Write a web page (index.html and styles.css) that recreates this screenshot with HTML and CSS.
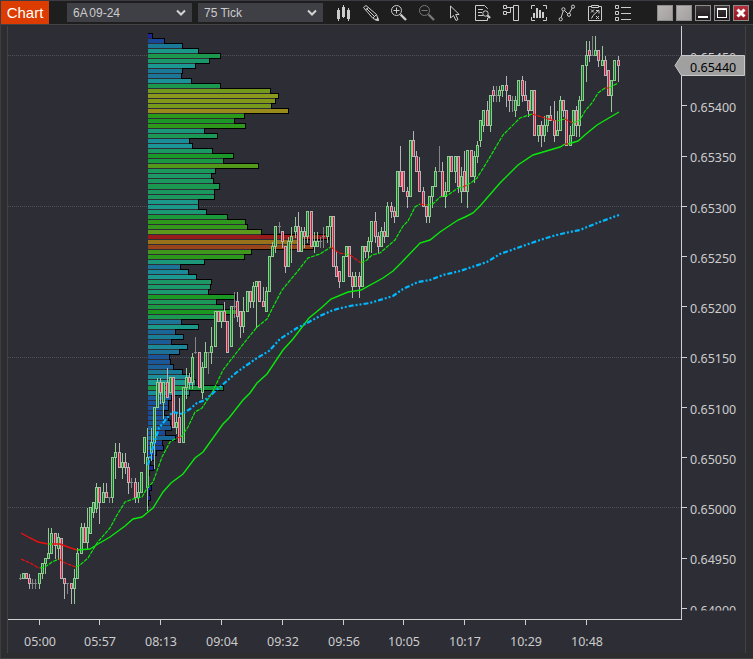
FILE: index.html
```html
<!DOCTYPE html>
<html lang="en">
<head>
  <meta charset="UTF-8">
  <title>Chart</title>
  <link rel="stylesheet" href="styles.css">
</head>
<body>
  <div class="window">
    <div class="toolbar">
      <div class="title">Chart</div>
      <div class="select instrument"><span>6A 09-24</span><svg width="12" height="8"><path d="M2 1.5L6 5.5L10 1.5"/></svg></div>
      <div class="select interval"><span>75 Tick</span><svg width="12" height="8"><path d="M2 1.5L6 5.5L10 1.5"/></svg></div>
      <div class="icons">
        <!-- chart style -->
        <svg viewBox="0 0 28 24"><path class="solid" d="M8 10h3v9h-3zM9 8h1v13h-1zM13 7h3v10h-3zM14 5h1v13h-1zM18 10h3v9h-3zM19 8h1v13h-1z"/></svg>
        <!-- draw -->
        <svg viewBox="0 0 28 24"><path d="M6.500 7.500L9 5.500L19.500 14.500L21.500 20.500L16 18.500ZM8.500 10L11.500 7.500M16 18L19.500 14.500M9.500 8.500L17.500 16.500"/><path class="solid" d="M18 20.500L22 21L21 17Z"/></svg>
        <!-- zoom in / out -->
        <svg viewBox="0 0 28 24"><circle cx="11.500" cy="10.500" r="5"/><path d="M8.500 10.500h6M11.500 7.500v6"/><path class="thick" d="M15.500 14.500L21 20"/></svg>
        <svg class="off" viewBox="0 0 28 24"><circle cx="11.500" cy="10.500" r="5"/><path d="M8.500 10.500h6"/><path class="thick" d="M15.500 14.500L21 20"/></svg>
        <!-- cursor -->
        <svg viewBox="0 0 28 24"><path d="M9.500 6V18L12.500 15.500L15 20.500L17 19.500L14.700 14.500H18.200Z"/></svg>
        <!-- data box -->
        <svg viewBox="0 0 28 24"><path d="M18.500 9V8.500L15.500 5.500H6.500V20.500H18.500V18M9 9.500h5M9 12.500h4M9 15.500h5"/><circle cx="16.500" cy="13.500" r="2.700"/><path class="thick" d="M18.500 15.500L21 18"/></svg>
        <!-- chart trader -->
        <svg viewBox="0 0 28 24"><path d="M6.500 5.500h3v3h-3zM6.500 11.500h3v3h-3zM16.500 5.500h5v15h-5zM10 7.500h6M10 12.500h3.500V8"/></svg>
        <!-- data series -->
        <svg viewBox="0 0 28 24"><path d="M6.500 9V5.500H10M18 5.500h3.500V9M6.500 17v3.500H10M18 20.500h3.500V17"/><path class="solid" d="M8 13h2v5h-2zM11 8h2v10h-2zM14 10h2v8h-2zM17 12h2v6h-2z"/></svg>
        <!-- indicators -->
        <svg viewBox="0 0 28 24"><path d="M8.200 17.500L10.200 11M11.500 10.500L14.800 13.800M16.500 13L19.200 8"/><circle cx="7.700" cy="19.200" r="1.600"/><circle cx="10.400" cy="9.300" r="1.600"/><circle cx="16" cy="14.800" r="1.600"/><circle cx="20" cy="6.700" r="1.600"/></svg>
        <!-- strategies -->
        <svg viewBox="0 0 28 24"><path d="M10 6.500H7.500V20.500H20.500V6.500H18M10.500 5.500h7v2h-7zM10 9.500l3 3M13 9.500l-3 3M15 16l3 3M18 16l-3 3M10.500 18.500L12 15.500L17.500 10.500M15 10.500h3v3"/></svg>
        <!-- properties -->
        <svg viewBox="0 0 28 24"><path d="M6.500 5.500h3v3h-3zM6.500 11.500h3v3h-3zM6.500 17.500h3v3h-3zM12 7.500h10M12 13.500h10M12 19.500h10"/></svg>
      </div>
      <div class="buttons">
        <i class="blank"></i>
        <i class="blank"></i>
        <i class="dark"><b class="min"></b></i>
        <i class="dark"><b class="max"></b></i>
        <i class="close"><svg width="14" height="14"><path d="M3.500 3.500L10.500 10.500M10.500 3.500L3.500 10.500"/></svg></i>
      </div>
    </div>
    <div class="panel">
      <svg id="chart" width="737" height="627" viewBox="8 26 737 627"></svg>
    </div>
  </div>
  <script src="chart.js"></script>
</body>
</html>
```
FILE: styles.css
```css
body {
  margin: 0;
  background: #2d2d30;
  font-family: "Liberation Sans", Arial, sans-serif;
}
.window {
  box-sizing: border-box;
  width: 753px;
  height: 659px;
  overflow: hidden;
  border-top: 1px solid #3c3c42;
  border-left: 1px solid #3c3c42;
  border-bottom: 1px solid #434346;
}
/* top bar */
.toolbar {
  display: flex;
  height: 23px;
  background: #1e1e1e;
  border-bottom: 1px solid #444448;
}
.title {
  width: 48px;
  height: 23px;
  background: #dd3c00;
  color: #fff;
  font-size: 15px;
  line-height: 24px;
  text-align: center;
}
.select {
  display: flex;
  align-items: center;
  justify-content: space-between;
  box-sizing: border-box;
  width: 125px;
  height: 19px;
  margin-top: 2px;
  padding: 0 5px 0 6px;
  background: #3f3f46;
  color: #ccc;
  font-size: 12px;
}
.instrument {
  margin-left: 18px;
  word-spacing: -1px;
}
.interval {
  margin-left: 6px;
}
.select path {
  fill: none;
  stroke: #d4d4d4;
  stroke-width: 2;
}
.icons {
  display: flex;
  margin-left: 6px;
}
.icons svg {
  width: 28px;
  height: 24px;
  margin-top: -1px;
  fill: none;
  stroke: #ccc;
  stroke-width: 1;
}
.icons .off {
  stroke: #777;
}
.icons .solid {
  fill: #ccc;
  stroke: none;
}
.icons .thick {
  stroke-width: 2.4;
}
/* window buttons */
.buttons {
  display: flex;
  gap: 3px;
  margin: 4px 0 0 20px;
}
.buttons i {
  box-sizing: border-box;
  width: 16px;
  height: 16px;
  border: 1px solid #8d8d90;
}
.buttons .blank {
  background: linear-gradient(135deg, #b8b4b4, #a39f9f);
}
.buttons .dark {
  background: linear-gradient(#3a3638, #1c181b);
}
.buttons .close {
  background: linear-gradient(#b5303c, #8e1620);
}
.buttons b {
  display: block;
  box-sizing: border-box;
}
.min {
  width: 10px;
  height: 2px;
  margin: 10px 0 0 2px;
  background: #fff;
}
.max {
  width: 10px;
  height: 10px;
  margin: 2px;
  border: 1px solid #fff;
  border-top-width: 2px;
}
.close svg {
  display: block;
  stroke: #fff;
  stroke-width: 3;
}
/* chart */
.panel {
  box-sizing: border-box;
  height: 627px;
  margin: 1px 7px 0 6px;
  background: #2d2d35;
  border-left: 1px solid #414147;
  border-right: 1px solid #414147;
}
#chart {
  display: block;
  font-family: "Noto Sans", "Open Sans", sans-serif;
  font-size: 12.5px;
}
#chart text {
  fill: #ccc;
}
#chart .tag {
  fill: #000;
}
.grid {
  stroke: #50505a;
  stroke-dasharray: 1 1;
}
.axis {
  fill: none;
  stroke: #d0d0d0;
}
.line {
  fill: none;
  stroke-width: 1.4;
}
.up {
  stroke: #0ae80a;
}
.down {
  stroke: #ec1010;
}
.fast {
  stroke-dasharray: 4 1;
  stroke-width: 1.2;
}
.vwap {
  fill: none;
  stroke: #00b8ff;
  stroke-width: 2.2;
  stroke-dasharray: 5 2 2 2 2 2;
}
```
FILE: chart.js
```js
var svg = document.getElementById("chart");
var out = "";

function rect(x, y, w, h, fill) {
  out += '<rect x="' + x + '" y="' + y + '" width="' + w + '" height="' + h + '" fill="' + fill + '"/>';
}
function line(points, cls) {
  out += '<polyline class="' + cls + '" points="' + points + '"/>';
}

// horizontal grid
[55.5, 206.5, 357.5, 507.5].forEach(function(y) {
  out += '<path class="grid" d="M8 ' + y + 'H681"/>';
});

// volume profile, one row per tick
var volume = [4,16,34,50,72,61,47,34,33,43,72,122,130,127,123,140,96,86,97,56,69,41,44,64,85,75,110,67,63,
  65,71,66,66,50,50,58,79,97,99,113,180,149,165,103,96,56,32,40,48,63,62,60,87,68,75,88,70,
  33,50,27,35,23,39,31,21,22,25,34,42,47,75,41,23,20,20,16,20,22,23,17,27,14,15,8,6,2,5,1,0,0,3,1,2,0];
function rowTop(i) {
  return Math.round(33.7 + i * 5.026);
}
volume.forEach(function(w, i) {
  rect(148, rowTop(i) - 1, w + 1, rowTop(i + 1) - rowTop(i) + 1, "#000");
});
volume.forEach(function(w, i) {
  var y = rowTop(i);
  var next = Math.min(w, volume[i + 1] || 0);
  rect(148, y, w, rowTop(i + 1) - y - 1, "hsl(" + 240 * (1 - w / 180) + ",70%,35%)");
  rect(148, rowTop(i + 1) - 1, next, 1, "#2d2d35");
});

// candles: x, high, top, bottom, low, direction (1 up, -1 down, 0 flat)
var candles = [
  [20,574,578,578,579,0],[23,573,573,578,578,1],[26,573,573,578,578,-1],[29,574,578,583,588,-1],[32,579,583,583,588,0],
  [35,579,583,583,588,0],[39,573,573,583,588,1],[42,563,563,573,578,1],[45,558,558,563,573,1],[48,528,553,558,558,1],
  [51,528,533,553,553,1],[55,533,533,545,558,-1],[58,533,537,548,559,1],[61,538,538,578,578,-1],[64,578,578,583,598,-1],
  [67,583,583,583,593,0],[71,583,583,588,603,-1],[74,569,578,588,603,1],[77,548,553,578,578,1],[81,523,527,553,553,1],
  [84,523,527,542,542,-1],[87,508,527,542,548,1],[90,507,507,533,533,1],[93,502,502,512,517,1],[96,483,487,508,512,1],
  [99,487,487,502,523,-1],[103,483,492,502,502,1],[106,483,492,497,497,-1],[109,497,497,497,502,0],[112,457,457,497,502,1],
  [115,443,452,457,478,1],[119,443,452,467,467,-1],[122,453,462,467,478,1],[125,453,462,467,473,-1],[128,463,467,482,493,-1],
  [131,478,482,482,487,0],[135,478,482,497,502,-1],[138,482,492,497,502,1],[141,472,472,492,492,1],[144,437,437,452,463,1],
  [147,428,457,487,510,1],[151,428,442,452,460,1],[154,407,407,442,468,1],[157,378,382,407,407,1],[160,378,382,392,403,-1],
  [163,382,382,402,418,1],[167,368,382,397,397,-1],[170,377,377,392,392,1],[173,377,377,427,427,-1],[176,413,422,427,433,1],
  [179,398,417,442,442,-1],[183,387,387,442,442,1],[186,368,377,387,398,1],[189,373,377,382,388,-1],[192,353,357,382,388,1],
  [195,337,352,352,353,0],[199,352,352,387,387,-1],[202,362,367,392,398,1],[205,342,352,367,367,1],[208,352,352,352,373,0],
  [211,327,346,352,363,1],[215,311,311,346,346,1],[218,311,311,321,321,-1],[221,311,311,321,327,1],[224,302,311,321,321,-1],
  [227,321,321,352,352,-1],[231,306,306,346,346,1],[234,292,306,306,317,0],[237,292,301,316,321,-1],[240,311,311,326,337,-1],
  [243,297,311,326,332,1],[247,291,291,311,311,1],[250,291,291,301,307,-1],[253,282,286,301,307,1],[256,281,281,286,327,1],
  [259,281,281,301,301,-1],[263,287,301,306,306,-1],[266,287,291,311,311,1],[269,256,256,291,291,1],[272,242,246,256,256,1],
  [275,226,226,246,252,1],[279,222,226,226,232,0],[282,231,231,241,247,-1],[285,246,246,266,272,-1],[288,237,241,266,266,1],
  [291,227,236,241,262,1],[295,217,226,231,237,1],[298,212,226,251,251,-1],[301,227,231,251,251,1],[304,227,231,236,247,-1],
  [307,211,211,236,242,1],[311,211,211,246,246,-1],[314,232,241,246,252,1],[317,232,241,246,246,1],[320,237,241,241,247,0],
  [323,227,236,236,247,0],[327,226,226,236,242,1],[330,216,216,226,247,1],[333,216,216,266,266,-1],[336,252,266,276,276,-1],
  [339,271,271,281,287,-1],[343,256,256,281,281,1],[346,246,246,256,256,1],[349,246,246,276,276,-1],[352,272,276,286,297,-1],
  [355,272,276,286,286,1],[359,272,276,286,297,-1],[362,246,246,286,286,1],[365,246,246,251,257,-1],[368,237,241,251,257,1],
  [371,221,221,241,252,1],[375,212,221,236,242,-1],[378,232,236,246,252,-1],[381,227,231,246,246,1],[384,222,231,236,242,-1],
  [387,202,206,236,236,1],[391,202,206,211,217,-1],[394,207,211,216,222,-1],[397,171,171,216,216,1],[400,146,171,186,186,-1],
  [403,171,171,191,191,-1],[407,187,191,196,207,-1],[410,140,140,196,196,1],[413,131,140,156,156,-1],[416,151,156,171,171,-1],
  [419,157,171,191,191,-1],[423,187,191,206,206,-1],[426,206,206,216,222,-1],[429,196,196,216,222,1],[432,186,186,196,207,1],
  [435,167,171,186,186,1],[439,146,171,171,171,0],[442,162,171,196,196,-1],[445,182,191,196,207,1],[448,156,156,191,191,1],
  [451,156,156,171,171,-1],[455,156,156,171,182,1],[458,156,156,186,192,-1],[461,167,176,191,202,1],[464,151,171,191,191,-1],
  [467,150,150,191,207,1],[471,150,150,176,176,-1],[474,151,156,176,182,1],[477,141,145,156,162,1],[480,120,120,140,146,1],
  [483,110,110,125,131,1],[487,101,110,125,125,-1],[490,95,95,125,131,1],[493,86,90,95,101,-1],[496,86,95,95,101,0],
  [499,86,90,95,101,1],[502,85,85,90,96,1],[506,76,85,90,106,-1],[509,95,95,100,111,-1],[512,96,100,100,111,0],
  [515,96,100,110,116,1],[518,80,80,105,105,1],[522,76,80,95,101,-1],[525,81,95,100,100,-1],[528,100,100,110,116,-1],
  [531,90,90,110,110,1],[534,90,90,135,135,-1],[538,125,125,135,141,1],[541,121,125,135,146,-1],[544,116,125,135,141,1],
  [547,115,115,125,131,1],[550,106,115,120,120,-1],[554,101,120,135,141,-1],[557,111,130,135,135,1],[560,96,100,130,130,1],
  [563,100,100,110,116,-1],[566,110,110,145,145,-1],[570,126,135,145,145,1],[573,110,110,135,135,1],[576,106,110,125,136,-1],
  [579,96,100,125,136,1],[582,65,65,100,100,1],[586,41,55,65,81,1],[589,41,50,55,61,-1],[592,36,55,55,55,0],
  [595,36,50,55,55,1],[598,50,50,60,66,-1],[602,46,60,65,65,1],[605,56,60,75,75,-1],[608,70,70,95,95,-1],
  [611,80,80,95,111,1],[614,60,60,80,80,1],[618,56,60,65,81,-1]
];
candles.forEach(function(c) {
  var x = c[0], dir = c[5];
  var edge = dir > 0 ? "#92c892" : dir < 0 ? "#b4b4b4" : "#858585";
  rect(x, c[1], 1, c[4] - c[1] + 1, edge);
  rect(x - 1, c[2], 3, c[3] - c[2] + 1, edge);
  if (dir) {
    rect(x, c[2] + 1, 1, c[3] - c[2] - 1, dir > 0 ? "#0a8224" : "#e8143c");
  }
});

// slow average
line("21,533 30,538 38,542 48,544", "line down");
line("48,544 52,544", "line up");
line("52,544 60,544 68,547 77,550", "line down");
line("77,550 90,549 98,544 110,537 125,526 133,519 142,517 148,512 153,508 163,492 171,483 183,474 195,458 203,452 223,424 229,418 243,400 250,393 257,383 267,374 283,350 293,339 309,318 320,309 331,299 348,292 361,290 383,278 393,271 402,262 420,243 430,240 440,232 458,220 465,217 473,213 480,206 500,183 505,178 518,165 533,155 560,147 565,144", "line up");
line("565,144 568,144", "line down");
line("568,144 578,141 586,134 597,125 619,112", "line up");

// fast average
line("21,559 30,563 37,567 40,568", "line fast down");
line("40,568 45,567 52,562 59,559", "line fast up");
line("59,559 65,563 76,567", "line fast down");
line("76,567 80,565 88,558 97,543 110,528 117,515 125,502 133,499 142,497 147,488 153,482 162,457 170,442 177,438", "line fast up");
line("177,438 181,437", "line fast down");
line("181,437 188,427 195,412 202,408 212,393 223,370 237,352 248,338 257,327 267,319 272,309 282,290 297,272 308,258 320,254 331,247", "line fast up");
line("331,247 339,253 345,254", "line fast down");
line("345,254 350,255", "line fast up");
line("350,255 361,263", "line fast down");
line("361,263 367,260 372,255 380,253 395,240 403,226 408,221 415,207 420,204", "line fast up");
line("420,204 427,205", "line fast down");
line("427,205 433,204 440,197 448,195 458,188 463,187", "line fast up");
line("463,187 467,185", "line fast down");
line("467,185 472,182 477,178 487,162 503,135 520,118 532,114", "line fast up");
line("532,114 545,118 557,121", "line fast down");
line("557,121 565,119", "line fast up");
line("565,119 573,123", "line fast down");
line("573,123 580,120 585,111 592,103 598,93 605,88", "line fast up");
line("605,88 609,88", "line fast down");
line("609,88 618,83", "line fast up");

line("148,465 153,447 159,428 167,418 173,412 182,414 190,409 197,403 205,400 220,387 237,372 257,358 269,351 280,339 297,328 307,323 320,316 331,311 337,309 350,306 370,303 393,296 403,289 418,282 430,280 443,275 460,271 487,262 500,254 520,247 540,240 553,236 565,233 580,230 597,223 608,219 619,215", "vwap");

// price axis
out += '<svg x="681" y="26" width="64" height="584.500" viewBox="681 26 64 584.500">';
for (var i = 0; i < 12; i++) {
  var price = (0.6545 - i * 0.0005).toFixed(5);
  var y = 55.5 + i * 50.25;
  out += '<text x="690" y="' + Math.round(y + 6.4) + '">' + price + '</text>';
  out += '<path class="axis" d="M681 ' + (Math.floor(y) + 0.5) + 'h6"/>';
}
out += '</svg>';
out += '<path class="axis" d="M681.500 26V619.500M8 619.500H682"/>';

// time axis
["05:00", "05:57", "08:13", "09:04", "09:32", "09:56", "10:05", "10:17", "10:29", "10:48"].forEach(function(t, i) {
  var x = Math.floor(39 + i * 60.8);
  out += '<path class="axis" d="M' + (x + 0.5) + ' 619v6"/>';
  out += '<text x="' + (x + 1) + '" y="646" text-anchor="middle">' + t + '</text>';
});

// last price
out += '<path d="M675 65.500L681.500 55.500H744.500V75.500H681.500Z" fill="#a0a0a0" stroke="#c8c8c8"/>';
out += '<text class="tag" x="690" y="72">0.65440</text>';

svg.innerHTML = out;
```
